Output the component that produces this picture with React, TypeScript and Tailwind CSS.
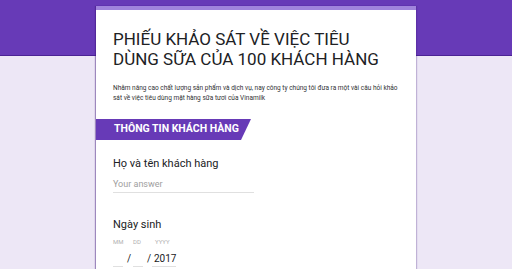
import React from "react";

export default function App() {
  return (
    <div
      className="w-[512px] h-[269px] overflow-hidden bg-[linear-gradient(#673ab7_0_55px,#4b2394_55px_56px,#ede7f6_56px)] pt-[6px]"
      style={{ fontFamily: "Roboto, 'Noto Sans', sans-serif" }}
    >
      <div className="mx-auto w-[320px] h-[400px] bg-white border-t-[4px] border-[#a084dc] shadow-[-1px_0_1px_rgba(60,20,120,0.45),1px_0_1px_rgba(60,20,120,0.25)]">
        <div className="px-[17px] pt-[19px]">
          <h1 className="text-[17px] leading-[20px] font-normal text-[#202124]">
            PHIẾU KHẢO SÁT VỀ VIỆC TIÊU
            <br />
            DÙNG SỮA CỦA 100 KHÁCH HÀNG
          </h1>
          <p className="mt-[15px] mr-[-4px] text-[6.5px] leading-[9.5px] text-[#303134]">
            Nhằm nâng cao chất lượng sản phẩm và dịch vụ, nay công ty chúng tôi đưa ra một vài câu hỏi khảo sát về việc tiêu dùng mặt hàng sữa tươi của Vinamilk
          </p>
        </div>
        <div className="mt-[16px] w-[155px] h-[21px] bg-[#673ab7] [clip-path:polygon(0_0,100%_0,calc(100%-10px)_100%,0_100%)] flex items-center pl-[18px]">
          <span className="text-white text-[10.5px] font-bold leading-none whitespace-nowrap">THÔNG TIN KHÁCH HÀNG</span>
        </div>
        <div className="px-[17px]">
          <div className="mt-[17px] text-[11px] leading-[13px] text-[#202124]">Họ và tên khách hàng</div>
          <div className="mt-[9px] w-[141px] border-b border-[#e0e0e0] pb-[2px] text-[9px] leading-[11px] text-[#9e9e9e]">
            Your answer
          </div>
          <div className="mt-[25px] text-[11px] leading-[13px] text-[#202124]">Ngày sinh</div>
          <div className="mt-[7px] flex items-end text-[10px] text-[#202124]">
            <div className="flex flex-col w-[10px]">
              <span className="text-[6px] leading-[8px] text-[#b0b0b0]">MM</span>
              <span className="h-[15px] mt-[6px] border-b border-[#e0e0e0]"></span>
            </div>
            <span className="ml-[4px] w-[6px] leading-[12px] mb-[2px]">/</span>
            <div className="flex flex-col w-[10px]">
              <span className="text-[6px] leading-[8px] text-[#b0b0b0]">DD</span>
              <span className="h-[15px] mt-[6px] border-b border-[#e0e0e0]"></span>
            </div>
            <span className="ml-[4px] w-[5px] leading-[12px] mb-[2px]">/</span>
            <div className="flex flex-col w-[24px]">
              <span className="text-[6px] leading-[8px] text-[#b0b0b0] pl-[3px] whitespace-nowrap">YYYY</span>
              <span className="h-[15px] mt-[6px] leading-[13px] border-b border-[#e0e0e0] pl-[2px]">2017</span>
            </div>
          </div>
        </div>
      </div>
    </div>
  );
}
